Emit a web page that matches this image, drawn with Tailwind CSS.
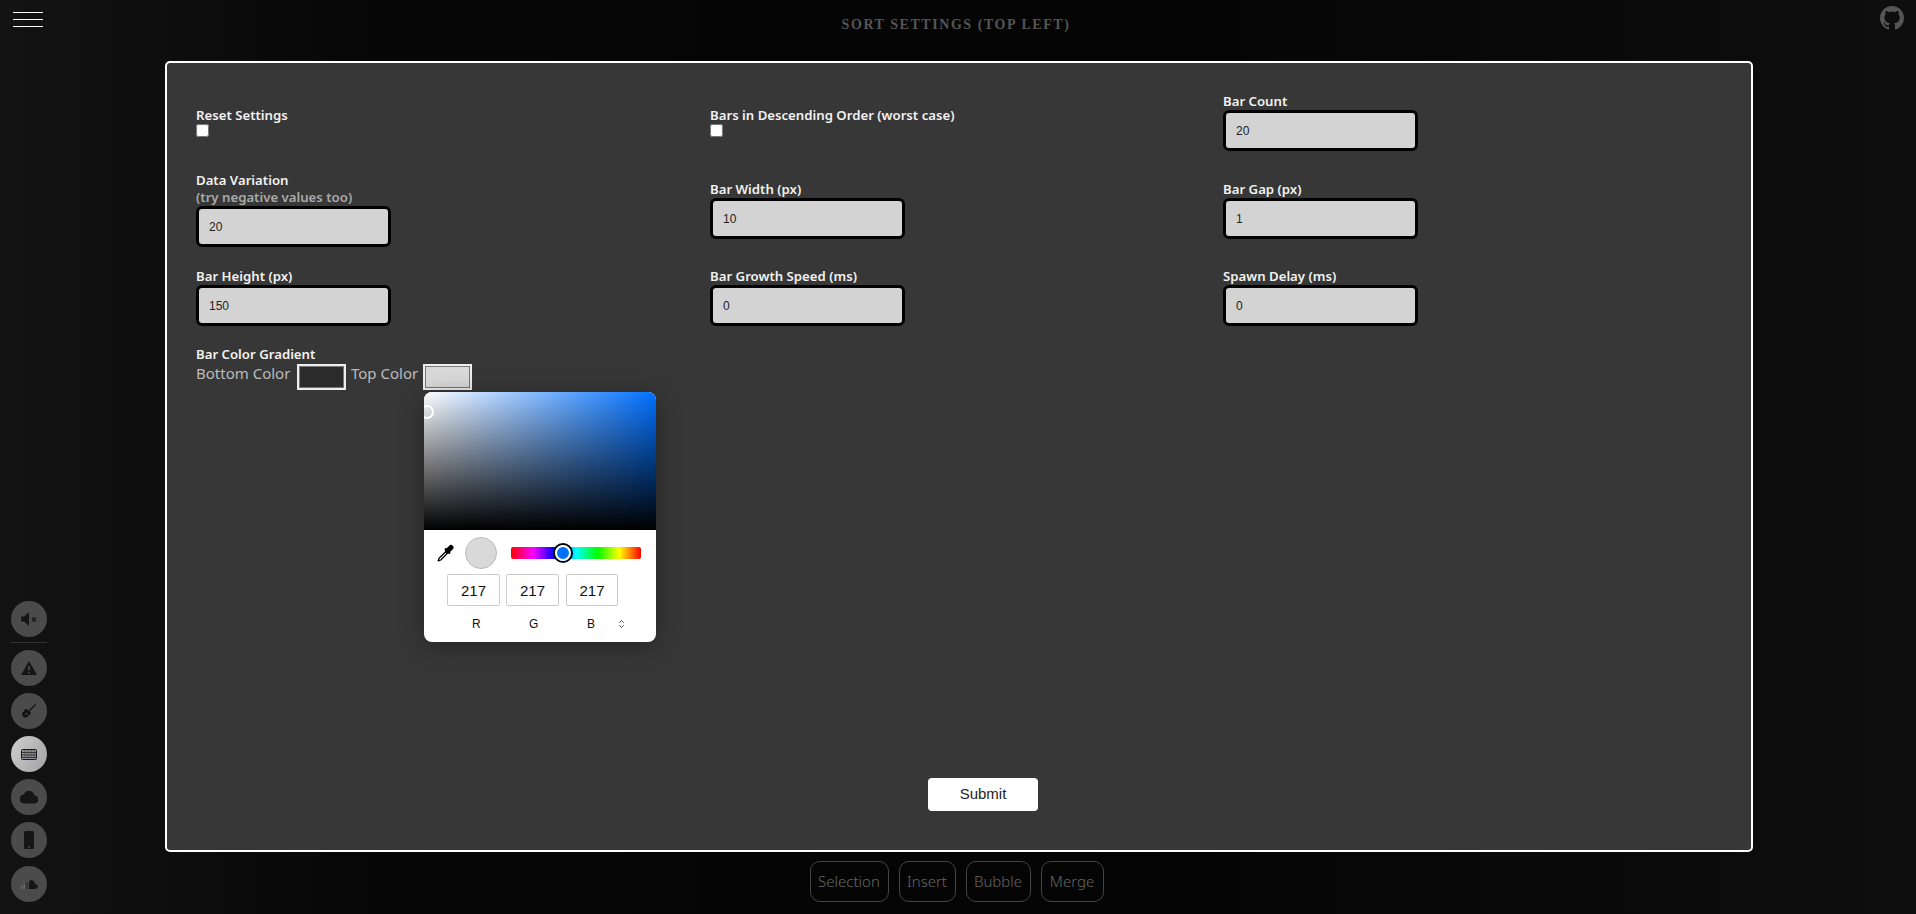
<!DOCTYPE html>
<html lang="en">
<head>
    <meta charset="UTF-8">
    <meta name="viewport" content="width=device-width, initial-scale=1.0">
    <title>Sort Settings</title>
    <script src="https://cdn.jsdelivr.net/npm/@tailwindcss/browser@4"></script>
</head>
<body class="h-[914px] overflow-hidden bg-[linear-gradient(to_right,#131313,#060606_20%,#040404_60%,#0e0e0e)] font-['Noto_Sans',sans-serif]">
    <div class="flex h-full flex-col pr-[163px] pl-[165px]">
        <!-- header -->
        <header class="relative flex h-[61px] shrink-0 justify-center pt-[17px] pr-[6px]">
            <h1 class="font-['Liberation_Serif',serif] text-[14px] leading-[16px] font-bold tracking-[1.55px] text-[#555]">SORT SETTINGS (TOP LEFT)</h1>
        </header>

        <!-- settings panel -->
        <form class="flex h-[791px] shrink-0 flex-col rounded-[5px] border-[2px] border-white bg-[#373737] pt-[30px] pr-[30px] pb-[39px] pl-[29px]">
            <div class="grid grid-cols-[514px_513px_1fr] grid-rows-[58px_88px_87px] items-end text-[13.2px] leading-[16px] font-semibold text-[#f2f2f2]">
                <div class="pb-[14px]">
                    <label class="mb-px block">Reset Settings</label>
                    <input type="checkbox" class="block h-[13px] w-[13px]">
                </div>
                <div class="pb-[14px]">
                    <label class="mb-px block">Bars in Descending Order (worst case)</label>
                    <input type="checkbox" class="block h-[13px] w-[13px]">
                </div>
                <div>
                    <label class="mb-px block">Bar Count</label>
                    <input type="text" value="20" class="block h-[41px] w-[195px] rounded-[6px] border-[3px] border-black bg-[#d3d3d3] pl-[10px] font-['Liberation_Sans',sans-serif] text-[12px] font-normal text-[#222]">
                </div>
                <div class="-mb-[8px]">
                    <label class="mb-px block">Data Variation</label>
                    <span class="mb-px block text-[#aaa]">(try negative values too)</span>
                    <input type="text" value="20" class="block h-[41px] w-[195px] rounded-[6px] border-[3px] border-black bg-[#d3d3d3] pl-[10px] font-['Liberation_Sans',sans-serif] text-[12px] font-normal text-[#222]">
                </div>
                <div>
                    <label class="mb-px block">Bar Width (px)</label>
                    <input type="text" value="10" class="block h-[41px] w-[195px] rounded-[6px] border-[3px] border-black bg-[#d3d3d3] pl-[10px] font-['Liberation_Sans',sans-serif] text-[12px] font-normal text-[#222]">
                </div>
                <div>
                    <label class="mb-px block">Bar Gap (px)</label>
                    <input type="text" value="1" class="block h-[41px] w-[195px] rounded-[6px] border-[3px] border-black bg-[#d3d3d3] pl-[10px] font-['Liberation_Sans',sans-serif] text-[12px] font-normal text-[#222]">
                </div>
                <div>
                    <label class="mb-px block">Bar Height (px)</label>
                    <input type="text" value="150" class="block h-[41px] w-[195px] rounded-[6px] border-[3px] border-black bg-[#d3d3d3] pl-[10px] font-['Liberation_Sans',sans-serif] text-[12px] font-normal text-[#222]">
                </div>
                <div>
                    <label class="mb-px block">Bar Growth Speed (ms)</label>
                    <input type="text" value="0" class="block h-[41px] w-[195px] rounded-[6px] border-[3px] border-black bg-[#d3d3d3] pl-[10px] font-['Liberation_Sans',sans-serif] text-[12px] font-normal text-[#222]">
                </div>
                <div>
                    <label class="mb-px block">Spawn Delay (ms)</label>
                    <input type="text" value="0" class="block h-[41px] w-[195px] rounded-[6px] border-[3px] border-black bg-[#d3d3d3] pl-[10px] font-['Liberation_Sans',sans-serif] text-[12px] font-normal text-[#222]">
                </div>
            </div>

            <!-- bar colours -->
            <div class="mt-[20px]">
                <label class="block text-[13.2px] leading-[16px] font-semibold text-[#f2f2f2]">Bar Color Gradient</label>
                <div class="mt-[2px] flex items-start text-[15px] leading-[20px] whitespace-nowrap text-[#bbb]">
                    <span class="-mt-px w-[95px]">Bottom Color</span>
                    <span class="ml-[6px] h-[26px] w-[49px] border-[2px] border-[#eee] bg-[#2b2b2b] outline outline-1 -outline-offset-3 outline-[#777]"></span>
                    <span class="-mt-px ml-[5px] w-[67px]">Top Color</span>
                    <div class="relative ml-[5px]">
                        <span class="block h-[26px] w-[49px] border-[2px] border-[#eee] bg-[#d9d9d9] outline outline-1 -outline-offset-3 outline-[#777]"></span>

                        <!-- colour picker popup -->
                        <div class="absolute top-[28px] left-px z-10 h-[250px] w-[232px] overflow-hidden rounded-[8px] bg-white shadow-[0_4px_24px_rgba(0,0,0,0.35)]">
                            <div class="relative h-[138px] bg-[linear-gradient(to_top,#000,transparent),linear-gradient(to_right,#fff,#0070ff)]">
                                <span class="absolute top-[13px] left-[-4px] h-[14px] w-[14px] rounded-full border-[2px] border-white"></span>
                            </div>
                            <div class="relative flex h-[44px] items-center pt-[2px] pl-[13px]">
                                <svg viewBox="0 0 17 18" class="h-[18px] w-[17px]">
                                    <path d="M9.500 7 11 8.500 3.800 16 1.200 16.800 2 14.200z" fill="#fff" stroke="#000" stroke-width="1.300" stroke-linejoin="round"/>
                                    <path d="M8 4.500 13 9.500" stroke="#000" stroke-width="2"/>
                                    <path d="M10.500 7 14 3.500" stroke="#000" stroke-width="5" stroke-linecap="round"/>
                                </svg>
                                <span class="ml-[11px] h-[32px] w-[32px] rounded-full border border-[#bbb] bg-[#d9d9d9]"></span>
                                <div class="relative -mt-px ml-[14px] h-[12px] w-[130px] rounded-[2px] bg-[linear-gradient(to_right,#f00,#f0f,#00f,#0ff,#0f0,#ff0,#f00)]">
                                    <span class="absolute top-[-4px] left-[42px] h-[20px] w-[20px] rounded-full border-[2px] border-black bg-[#0070ff] outline-2 -outline-offset-4 outline-white"></span>
                                </div>
                            </div>
                            <div class="flex gap-[6px] pl-[23px] font-['Liberation_Sans',sans-serif] text-[15px] text-[#111]">
                                <input type="text" value="217" class="h-[32px] w-[53px] rounded-[2px] border border-[#ccc] text-center">
                                <input type="text" value="217" class="h-[32px] w-[53px] rounded-[2px] border border-[#ccc] text-center">
                                <input type="text" value="217" class="ml-px h-[32px] w-[52px] rounded-[2px] border border-[#ccc] text-center">
                            </div>
                            <div class="relative mt-[10px] h-[16px] font-['Liberation_Sans',sans-serif] text-[12px] leading-[16px] text-[#111]">
                                <span class="absolute left-[48px]">R</span>
                                <span class="absolute left-[105px]">G</span>
                                <span class="absolute left-[163px]">B</span>
                                <svg viewBox="0 0 8 12" class="absolute top-[2px] left-[194px] h-[12px] w-[7px]" fill="none" stroke="#333"><path d="M1.500 4.500 4 2l2.500 2.500M1.500 7.500 4 10l2.500-2.500"/></svg>
                            </div>
                        </div>
                    </div>
                </div>
            </div>

            <button type="button" class="mt-auto ml-[732px] h-[33px] w-[110px] rounded-[4px] bg-white font-['Liberation_Sans',sans-serif] text-[15px] text-[#222]">Submit</button>
        </form>

        <!-- sort buttons -->
        <nav class="mt-[9px] flex justify-center gap-[10px] pr-[5px] text-[15px] font-light text-[#666]">
            <button class="h-[41px] w-[79px] rounded-[10px] border border-[#444]">Selection</button>
            <button class="h-[41px] w-[57px] rounded-[10px] border border-[#444]">Insert</button>
            <button class="h-[41px] w-[65px] rounded-[10px] border border-[#444]">Bubble</button>
            <button class="h-[41px] w-[63px] rounded-[10px] border border-[#444]">Merge</button>
        </nav>
    </div>

    <!-- hamburger menu -->
    <div class="fixed top-[12px] left-[13px] flex w-[30px] flex-col gap-[6px]">
        <span class="h-px bg-white"></span>
        <span class="h-px bg-white"></span>
        <span class="h-px bg-white"></span>
    </div>

    <!-- github -->
    <svg viewBox="0 0 16 16" class="fixed top-[6px] left-[1880px] h-[24px] w-[24px]" fill="#555"><path d="M8 0C3.580 0 0 3.580 0 8c0 3.540 2.290 6.530 5.470 7.590.4.070.55-.17.55-.38 0-.19-.01-.82-.01-1.490-2.010.37-2.530-.49-2.690-.94-.09-.23-.48-.94-.82-1.130-.28-.15-.68-.52-.01-.53.63-.01 1.080.58 1.230.82.72 1.210 1.870.87 2.330.66.07-.52.28-.87.51-1.070-1.780-.2-3.640-.89-3.640-3.950 0-.87.31-1.590.82-2.150-.08-.2-.36-1.020.08-2.120 0 0 .67-.21 2.200.82.64-.18 1.320-.27 2-.27s1.360.09 2 .27c1.530-1.040 2.200-.82 2.200-.82.44 1.100.16 1.920.08 2.120.51.56.82 1.270.82 2.150 0 3.070-1.870 3.750-3.650 3.950.29.25.54.73.54 1.480 0 1.070-.01 1.930-.01 2.200 0 .21.15.46.55.38A8.010 8.010 0 0 0 16 8c0-4.420-3.580-8-8-8z"/></svg>

    <!-- sound panel -->
    <aside class="fixed top-[601px] left-[11px] flex w-[36px] flex-col gap-[7px]">
        <button class="flex h-[36px] w-[36px] items-center justify-center rounded-full bg-[#4b4b4b]">
            <svg viewBox="0 0 20 20" class="h-[20px] w-[20px]" fill="#151515"><path d="M2 7.500v5h3l5 4.500V3L5 7.500z"/><path d="m13 8.500 4 4m0-4-4 4" stroke="#151515" stroke-width="1.300" fill="none"/></svg>
        </button>
        <span class="-mt-[2px] h-px bg-[#333]"></span>
        <button class="flex h-[36px] w-[36px] items-center justify-center rounded-full bg-[#4b4b4b]">
            <svg viewBox="0 0 18 18" class="h-[18px] w-[18px]"><path d="M9 2 1 16h16z" fill="#151515"/><path d="M9 7v4.500M9 13v1.500" stroke="#6b5a5a" stroke-width="1.300"/></svg>
        </button>
        <button class="flex h-[36px] w-[36px] items-center justify-center rounded-full bg-[#4b4b4b]">
            <svg viewBox="0 0 18 18" class="h-[18px] w-[18px]"><path d="M7 7.500C5.500 6.500 4.500 7.500 4 9c-.5 1-2.500 1.500-2 3.500.3 1.800 2 3.500 3.800 3.300 2-.3 2.300-2.200 3.300-2.800 1.300-.6 2.200-1.700 1.400-3z" fill="#151515"/><path d="m8 10 7.500-7.500" stroke="#151515" stroke-width="1.500"/><circle cx="6.300" cy="11.700" r="1" fill="#4b4b4b"/></svg>
        </button>
        <button class="flex h-[36px] w-[36px] items-center justify-center rounded-full bg-[linear-gradient(120deg,#cfcfcf,#a2a2a2)]">
            <svg viewBox="0 0 16 11" class="h-[11px] w-[16px]"><rect x="0.500" y="0.500" width="15" height="10" rx="1" fill="#8d8d9c" stroke="#1a1a1a"/><path d="M1 3.500h14M1 6h14M1 8.500h14" stroke="#222" stroke-width="0.800"/><path d="M4 1v7M7 1v7M10 1v7M13 1v7" stroke="#443" stroke-width="0.600"/></svg>
        </button>
        <button class="flex h-[36px] w-[36px] items-center justify-center rounded-full bg-[#4b4b4b]">
            <svg viewBox="0 0 18 14" class="h-[14px] w-[18px]" fill="#151515"><path d="M14.500 5.500A5.500 5.500 0 0 0 4 4.200 4.500 4.500 0 0 0 4.500 13.500H14a4 4 0 0 0 .5-8z"/></svg>
        </button>
        <button class="flex h-[36px] w-[36px] items-center justify-center rounded-full bg-[#4b4b4b]">
            <svg viewBox="0 0 10 18" class="h-[18px] w-[10px]" fill="#151515"><path d="M1.500 0h7A1.500 1.500 0 0 1 10 1.500v15A1.500 1.500 0 0 1 8.500 18h-7A1.500 1.500 0 0 1 0 16.500v-15A1.500 1.500 0 0 1 1.500 0zM5 15a1 1 0 1 0 0 2 1 1 0 0 0 0-2z"/></svg>
        </button>
        <button class="mt-[1px] flex h-[36px] w-[36px] items-center justify-center rounded-full bg-[#4b4b4b]">
            <svg viewBox="0 0 18 9" class="h-[9px] w-[18px]" fill="#151515"><path d="M9 1.500C10 .5 11.500 0 12 0a4.500 4.500 0 0 1 3 4 2.500 2.500 0 1 1 .5 5H9z"/><path d="M7.500 2v7M6 3v6" stroke="#2e2e2e"/><path d="M4.500 4v5M3 4.500V9M1.500 5.500V9" stroke="#686868"/></svg>
        </button>
    </aside>
</body>
</html>
